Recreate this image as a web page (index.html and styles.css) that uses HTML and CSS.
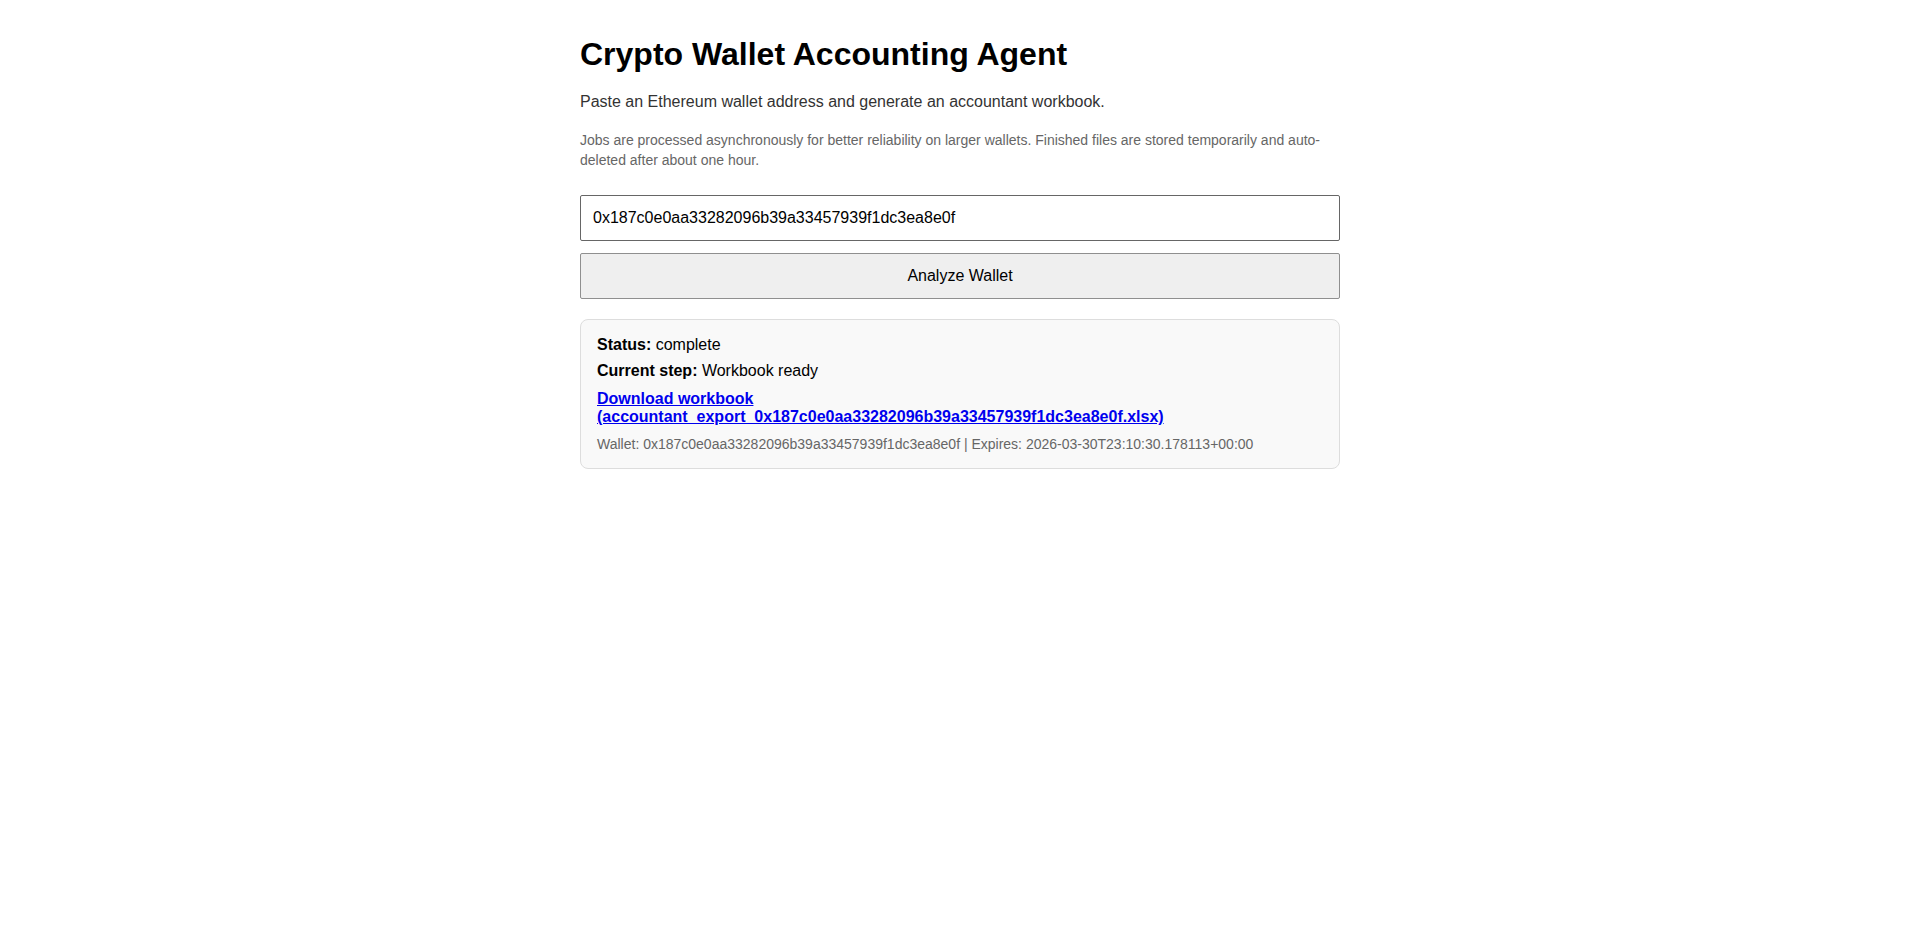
FILE: index.html
```html
<!DOCTYPE html>
<html lang="en">
<head>
    <meta charset="UTF-8">
    <meta name="viewport" content="width=device-width, initial-scale=1.0">
    <title>Crypto Wallet Accounting Agent</title>
    <link rel="stylesheet" href="styles.css">
</head>
<body>
    <main class="page">
        <h1>Crypto Wallet Accounting Agent</h1>
        <p class="lead">Paste an Ethereum wallet address and generate an accountant workbook.</p>
        <p class="note">Jobs are processed asynchronously for better reliability on larger wallets. Finished files are stored temporarily and auto-deleted after about one hour.</p>

        <form class="wallet-form" onsubmit="return false">
            <input type="text" class="wallet-input" value="0x187c0e0aa33282096b39a33457939f1dc3ea8e0f">
            <button type="submit">Analyze Wallet</button>
        </form>

        <div class="result">
            <p><strong>Status:</strong> complete</p>
            <p><strong>Current step:</strong> Workbook ready</p>
            <p class="link-row"><a class="download" href="#">Download workbook (accountant_export_0x187c0e0aa33282096b39a33457939f1dc3ea8e0f.xlsx)</a></p>
            <p class="meta">Wallet: 0x187c0e0aa33282096b39a33457939f1dc3ea8e0f | Expires: 2026-03-30T23:10:30.178113+00:00</p>
        </div>
    </main>
</body>
</html>
```

FILE: styles.css
```css
body {
    font-family: Arial, "Liberation Sans", sans-serif;
    margin: 0;
    padding: 0 5px 0 0;
    color: #000;
    background: #fff;
}
.page {
    max-width: 760px;
    margin: 0 auto;
    padding: 36px 0;
}
h1 {
    font-size: 32px;
    margin: 0 0 20px;
}
.lead {
    font-size: 16px;
    color: #333;
    margin: 0 0 20px;
}
.note {
    font-size: 14px;
    color: #666;
    line-height: 1.4;
    margin: 0 0 25px;
}
.wallet-form { display: flex; flex-direction: column; gap: 12px; }
.wallet-input {
    font-family: inherit;
    font-size: 16px;
    padding: 13px 12px;
    border: 1px solid #666;
    border-radius: 2px;
    color: #000;
}
button {
    font-family: inherit;
    font-size: 16px;
    padding: 13px 12px;
    background: #efefef;
    border: 1px solid #8f8f8f;
    border-radius: 2px;
    color: #000;
}
.result {
    margin-top: 20px;
    padding: 16px 16px 16px;
    background: #f9f9f9;
    border: 1px solid #ddd;
    border-radius: 8px;
}
.result p { margin: 0 0 8px; font-size: 16px; }
.result .link-row { margin: 10px 0 10px; }
.download { color: #0000ee; font-weight: bold; }
.result .meta { font-size: 14px; color: #666; margin: 0; }
```
